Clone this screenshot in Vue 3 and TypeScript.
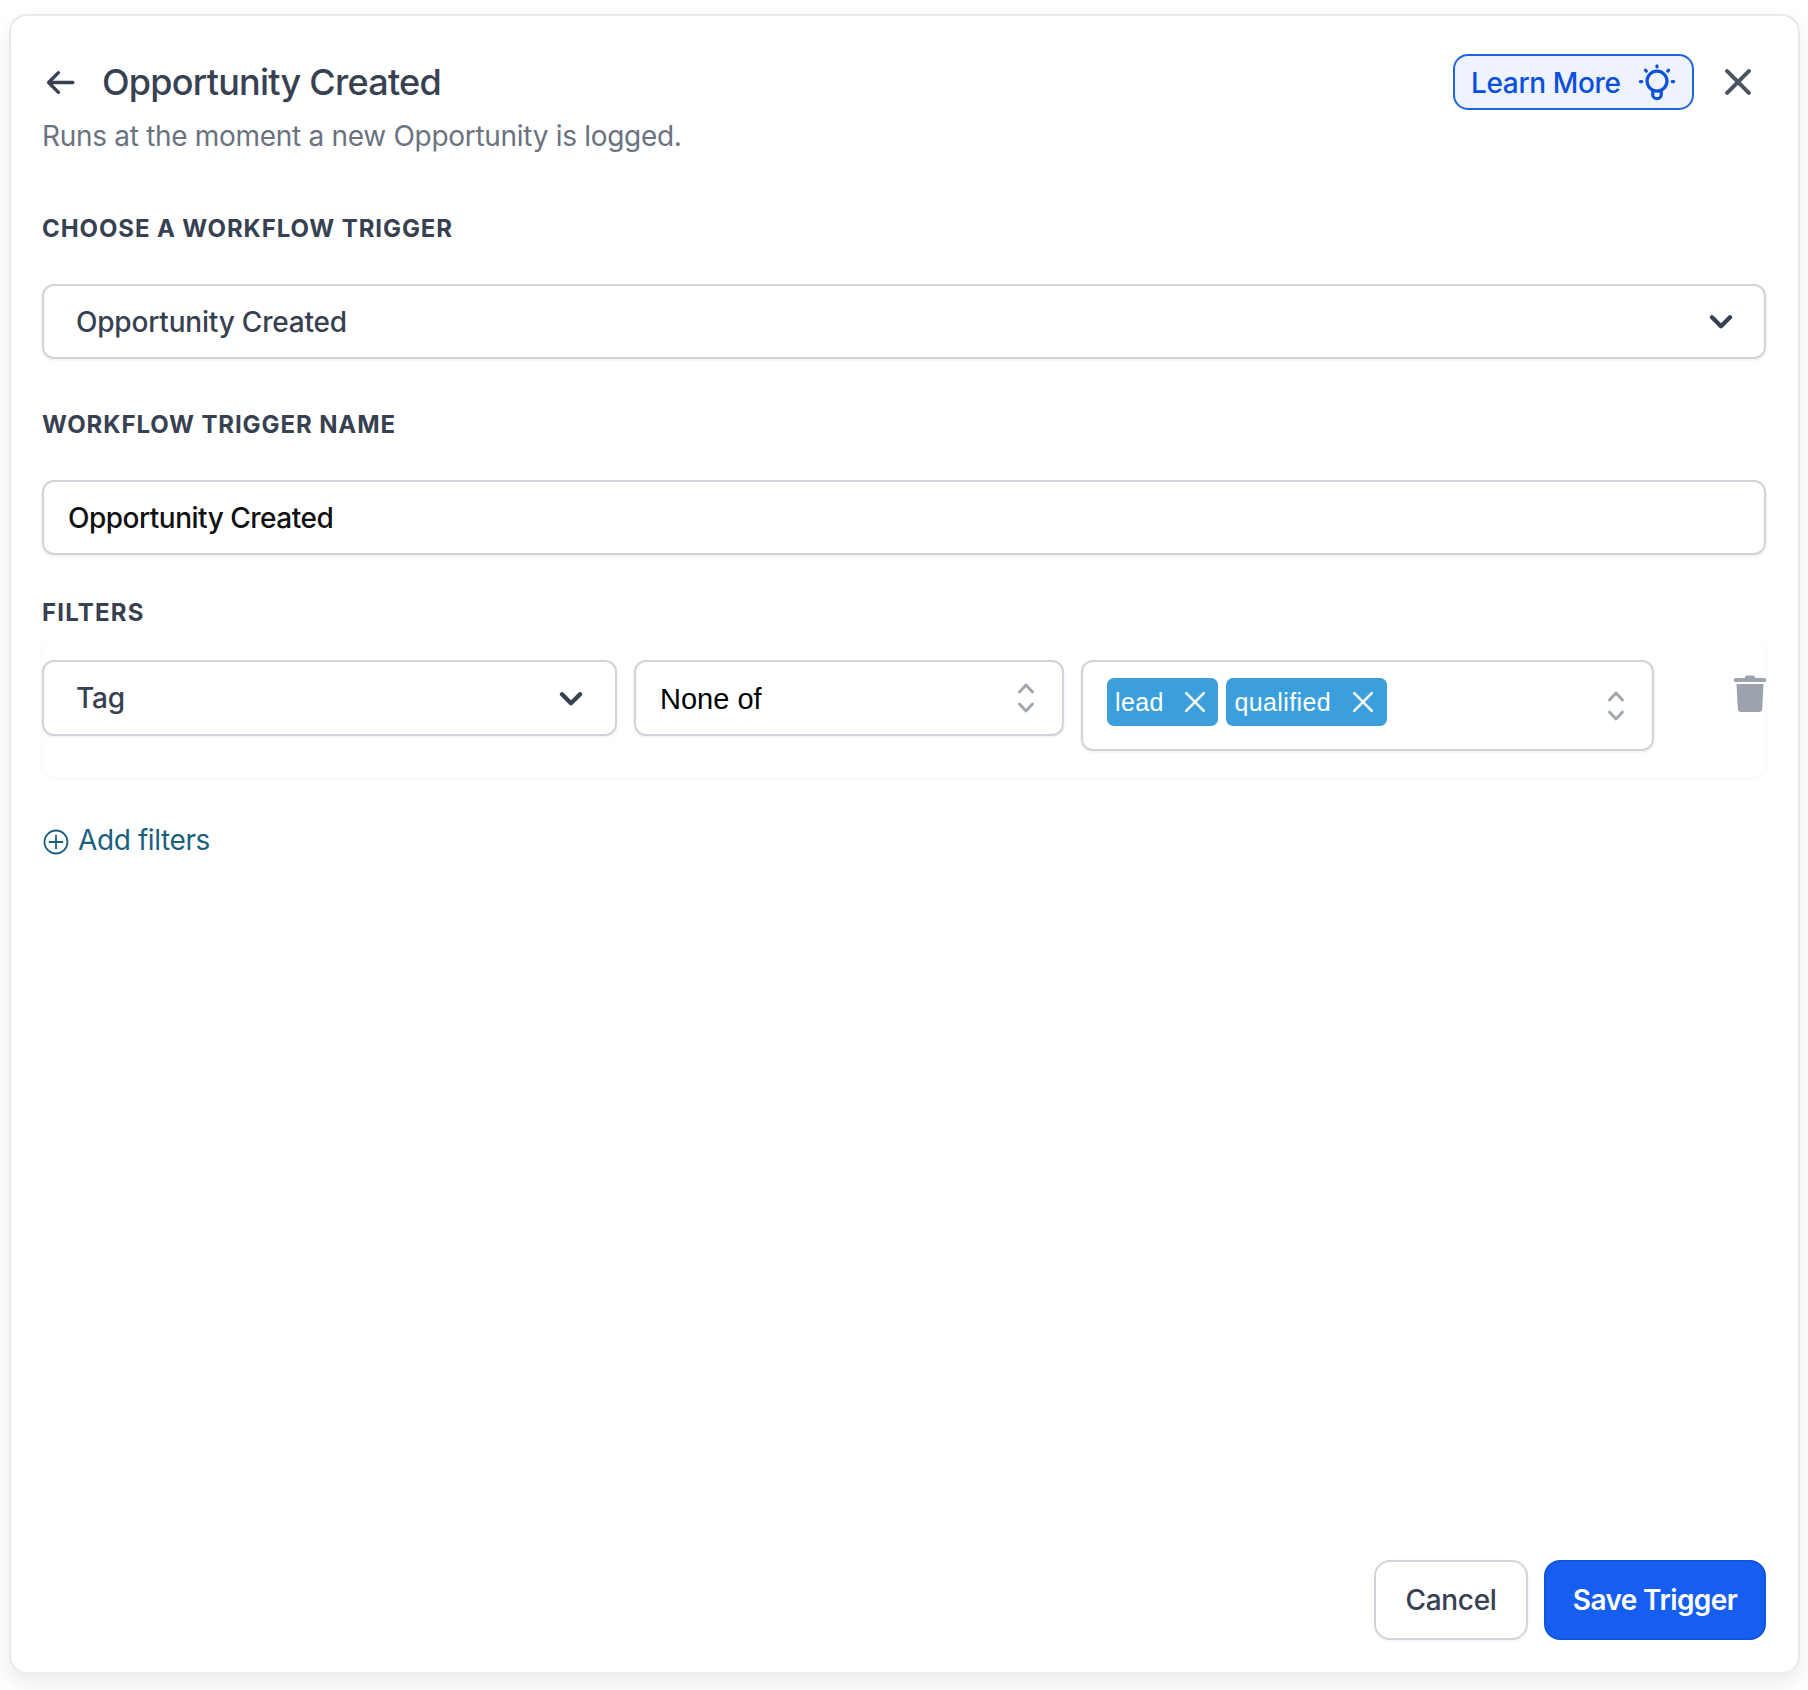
<script setup lang="ts">
const title: string = 'Opportunity Created'
const chips: string[] = ['lead', 'qualified']
</script>

<template>
  <div class="page">
    <section class="card">
      <header class="head">
        <svg class="back" viewBox="0 0 28 24" fill="none" stroke="#374151" stroke-width="3.200" stroke-linecap="round" stroke-linejoin="round"><path d="M26 12H3M12 2.500 2.500 12l9.500 9.500" /></svg>
        <h1 class="title">{{ title }}</h1>
        <button class="learn">
          <span class="learn-text">Learn More</span>
          <svg class="bulb" viewBox="0 0 40 40" fill="none" stroke="#0f52d8" stroke-width="3.400" stroke-linecap="round"><circle cx="20" cy="18.500" r="10.500" /><path d="M15.500 29.500v3a4.500 4.500 0 0 0 9 0v-3M20 2.500v1M7.800 7l1 1M32.200 7l-1 1M2.500 19H4M36 19h1.500" /></svg>
        </button>
        <svg class="close" viewBox="0 0 24 24" fill="none" stroke="#4b5563" stroke-width="3.800" stroke-linecap="round"><path d="M2 2l20 20M22 2 2 22" /></svg>
      </header>
      <p class="sub">Runs at the moment a new Opportunity is logged.</p>

      <div class="label first">CHOOSE A WORKFLOW TRIGGER</div>
      <div class="field select main">
        <span>{{ title }}</span>
        <svg class="chev" viewBox="0 0 20 12" fill="none" stroke="#374151" stroke-width="3.600" stroke-linecap="round" stroke-linejoin="round"><path d="M2.500 2.500 10 10l7.500-7.500" /></svg>
      </div>

      <div class="label second">WORKFLOW TRIGGER NAME</div>
      <div class="field input">{{ title }}</div>

      <div class="label third">FILTERS</div>
      <div class="filter-box">
        <div class="field select tag">
          <span>Tag</span>
          <svg class="chev" viewBox="0 0 20 12" fill="none" stroke="#374151" stroke-width="3.600" stroke-linecap="round" stroke-linejoin="round"><path d="M2.500 2.500 10 10l7.500-7.500" /></svg>
        </div>
        <div class="field none">
          <span class="none-text">None of</span>
          <svg class="updown" viewBox="0 0 18 32" fill="none" stroke="#a1a5ad" stroke-width="2.900" stroke-linecap="round" stroke-linejoin="round"><path d="M2.500 10 9 3l6.500 7M2.500 22 9 29l6.500-7" /></svg>
        </div>
        <div class="field multi">
          <span v-for="chip in chips" :key="chip" class="chip">
            {{ chip }}
            <svg class="chip-x" viewBox="0 0 20 20" fill="none" stroke="#fff" stroke-width="2.300" stroke-linecap="round"><path d="M2 2l16 16M18 2 2 18" /></svg>
          </span>
          <svg class="updown multi-arrows" viewBox="0 0 18 32" fill="none" stroke="#a1a5ad" stroke-width="2.900" stroke-linecap="round" stroke-linejoin="round"><path d="M2.500 10 9 3l6.500 7M2.500 22 9 29l6.500-7" /></svg>
        </div>
        <svg class="trash" viewBox="0 0 32 37" fill="#9ca3af"><path d="M11 2.500C11 1 12 .5 13.500 .5h5C20 .5 21 1 21 2.500V3h9.500A1.500 1.500 0 0 1 32 4.500v1A1.500 1.500 0 0 1 30.500 7h-29A1.500 1.500 0 0 1 0 5.500v-1A1.500 1.500 0 0 1 1.500 3H11zM2.500 9h27l-1.300 25c-.1 1.800-1.200 3-3 3H6.800c-1.800 0-2.900-1.200-3-3z" /></svg>
      </div>

      <div class="add">
        <svg class="plus" viewBox="0 0 26 26" fill="none" stroke="#1b5f7e" stroke-width="1.800" stroke-linecap="round"><circle cx="13" cy="13" r="11.500" /><path d="M13 6.500v13M6.500 13h13" /></svg>
        <span>Add filters</span>
      </div>

      <footer class="foot">
        <button class="btn cancel">Cancel</button>
        <button class="btn save">Save Trigger</button>
      </footer>
    </section>
  </div>
</template>

<style>
html, body { background: #fff; }
</style>

<style scoped>
.page {
  width: 1808px;
  height: 1690px;
  box-sizing: border-box;
  padding: 14px 8px 16px 9px;
  font-family: Inter, "Liberation Sans", sans-serif;
  background: #fff;
}
.card {
  box-sizing: border-box;
  height: 100%;
  background: #fff;
  border: 2px solid #e7e8ec;
  border-bottom-color: #eceef0;
  border-radius: 18px;
  padding: 38px 32px 32px 31px;
  display: flex;
  flex-direction: column;
  box-shadow: 0 10px 22px rgba(0, 0, 0, 0.08);
}
.head {
  height: 56px;
  display: flex;
  align-items: center;
}
.back { width: 29px; height: 25px; margin-left: 4px; flex: none; }
.title {
  margin: 0 0 0 27px;
  font-size: 36px;
  font-weight: 500;
  color: #374151;
  letter-spacing: -0.75px;
  flex: 1;
}
.learn {
  box-sizing: border-box;
  width: 241px;
  height: 56px;
  border: 2px solid #2065d8;
  border-radius: 15px;
  background: #eef3fd;
  display: flex;
  align-items: center;
  padding: 0 16px 0 16px;
  justify-content: space-between;
  font: 500 28px Inter, "Liberation Sans", sans-serif;
  letter-spacing: -0.35px;
  color: #0b50dc;
}
.learn-text { padding-top: 2px; }
.bulb { width: 38px; height: 39px; }
.close { width: 26px; height: 26px; margin-left: 31px; margin-right: 15px; }
.sub {
  margin: 8px 0 0;
  font-size: 28px;
  line-height: 36px;
  letter-spacing: -0.3px;
  color: #6b7280;
}
.label {
  margin-top: 42px;
  font-size: 24px;
  line-height: 30px;
  font-weight: 700;
  color: #374151;
  letter-spacing: 0.9px;
}
.label.first { margin-top: 60px; }
.label.second { margin-top: 51px; }
.label.third { margin-top: 43px; letter-spacing: 1.2px; }
.field {
  box-sizing: border-box;
  background: #fff;
  border: 2px solid #d1d5db;
  border-radius: 12px;
  box-shadow: 0 1px 3px rgba(0, 0, 0, 0.08);
  font-size: 28px;
}
.select {
  padding: 0 31px 0 32px;
  display: flex;
  align-items: center;
  justify-content: space-between;
  color: #374151;
  font-weight: 500;
  letter-spacing: -0.2px;
}
.main {
  height: 75px;
  margin-top: 40px;
}
.chev { width: 24px; height: 15px; }
.input {
  height: 75px;
  margin-top: 40px;
  padding: 0 24px;
  display: flex;
  align-items: center;
  color: #111;
  font-weight: 500;
  letter-spacing: -0.5px;
}
.filter-box {
  box-sizing: border-box;
  height: 150px;
  padding-top: 32px;
  display: flex;
  align-items: flex-start;
  border-radius: 16px;
  box-shadow: 0 1px 3px rgba(0, 0, 0, 0.05);
}
.tag {
  width: 575px;
  height: 76px;
  padding: 0 32px 0 32px;
}
.none {
  width: 430px;
  height: 76px;
  margin-left: 17px;
  padding: 0 27px 0 24px;
  display: flex;
  align-items: center;
  justify-content: space-between;
  color: #000;
  font-size: 29px;
  font-family: "Liberation Sans", Arial, sans-serif;
}
.none-text { padding-top: 2px; }
.updown { width: 18px; height: 32px; }
.multi {
  width: 573px;
  height: 91px;
  margin-left: 17px;
  padding: 16px 27px 0 24px;
  display: flex;
  align-items: flex-start;
  gap: 8px;
}
.multi-arrows { margin-left: auto; margin-top: 12px; }
.chip {
  height: 48px;
  box-sizing: border-box;
  padding: 0 12px 0 8px;
  background: #3a9fdc;
  border-radius: 7px;
  color: #fff;
  font: 400 25px "Liberation Sans", Arial, sans-serif;
  letter-spacing: 0.4px;
  display: flex;
  align-items: center;
  gap: 20.5px;
}
.chip:last-of-type { padding-right: 13px; gap: 21px; }
.chip-x { width: 22px; height: 22px; }
.trash { width: 32px; height: 37px; margin-left: auto; margin-top: 15px; }
.add {
  margin-top: 44px;
  margin-left: 1px;
  display: flex;
  align-items: center;
  gap: 9px;
  height: 36px;
  font-size: 28px;
  letter-spacing: -0.4px;
  color: #1b5f7e;
}
.plus { width: 26px; height: 26px; margin-top: 3px; }
.foot {
  margin-top: auto;
  display: flex;
  justify-content: flex-end;
  gap: 16px;
}
.btn {
  box-sizing: border-box;
  height: 80px;
  border-radius: 16px;
  font: 500 28px Inter, "Liberation Sans", sans-serif;
  letter-spacing: -0.3px;
}
.cancel {
  width: 154px;
  background: #fff;
  border: 2px solid #d1d5db;
  color: #374151;
  box-shadow: 0 1px 3px rgba(0, 0, 0, 0.06);
}
.save {
  width: 222px;
  background: #155eef;
  border: 2px solid #0f55e0;
  color: #fff;
  font-weight: 600;
  letter-spacing: -0.6px;
}
</style>
